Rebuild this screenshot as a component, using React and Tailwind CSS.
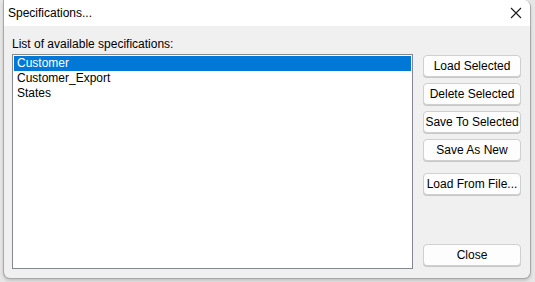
import React, { useState } from 'react';

const specs = ['Customer', 'Customer_Export', 'States'];

const DlgButton = ({ children, className = '' }) => (
  <button
    className={`h-[22px] w-[98px] rounded-[4px] border border-[#d0d0d0] bg-[#fdfdfd] text-[12px] leading-none text-black shadow-[0_1px_0_#c8c8c8] ${className}`}
  >
    {children}
  </button>
);

const App = () => {
  const [selected, setSelected] = useState(0);

  return (
    <div
      className="w-[535px] h-[282px] bg-[#e6e6e6] pl-[3px] overflow-hidden"
      style={{ fontFamily: '"Liberation Sans", Arial, sans-serif' }}
    >
      <div className="w-[528px] h-[279px] flex flex-col rounded-b-[7px] rounded-tr-[7px] border-x border-b border-[#a8a8a8] bg-[#f0f0f0] overflow-hidden shadow-[0_2px_3px_rgba(0,0,0,0.15)]">
        {/* Title bar */}
        <div className="h-[26px] shrink-0 bg-white flex items-center justify-between pl-[4px] pr-[8px]">
          <span className="text-[12px] text-black">Specifications...</span>
          <svg width="12" height="12" viewBox="0 0 12 12" className="mr-[0px]">
            <path d="M1 1 L11 11 M11 1 L1 11" stroke="#1a1a1a" strokeWidth="1.1" fill="none" />
          </svg>
        </div>

        {/* Body */}
        <div className="flex flex-1 pl-[8px] pt-[11px] gap-[10px]">
          <div className="flex flex-col w-[401px]">
            <div className="text-[12px] leading-[15px] h-[17px] text-black">List of available specifications:</div>
            <div className="h-[215px] border border-[#828790] bg-white p-[1px]">
              {specs.map((s, i) => (
                <div
                  key={s}
                  onClick={() => setSelected(i)}
                  className={`h-[15px] pl-[3px] text-[12px] leading-[15px] ${
                    selected === i ? 'bg-[#0078d7] text-white' : 'text-black'
                  }`}
                >
                  {s}
                </div>
              ))}
            </div>
          </div>

          <div className="flex flex-col pt-[18px]">
            <DlgButton>Load Selected</DlgButton>
            <DlgButton className="mt-[6px]">Delete Selected</DlgButton>
            <DlgButton className="mt-[6px]">Save To Selected</DlgButton>
            <DlgButton className="mt-[6px]">Save As New</DlgButton>
            <DlgButton className="mt-[12px]">Load From File...</DlgButton>
            <DlgButton className="mt-[49px]">Close</DlgButton>
          </div>
        </div>
      </div>
    </div>
  );
};

export default App;
